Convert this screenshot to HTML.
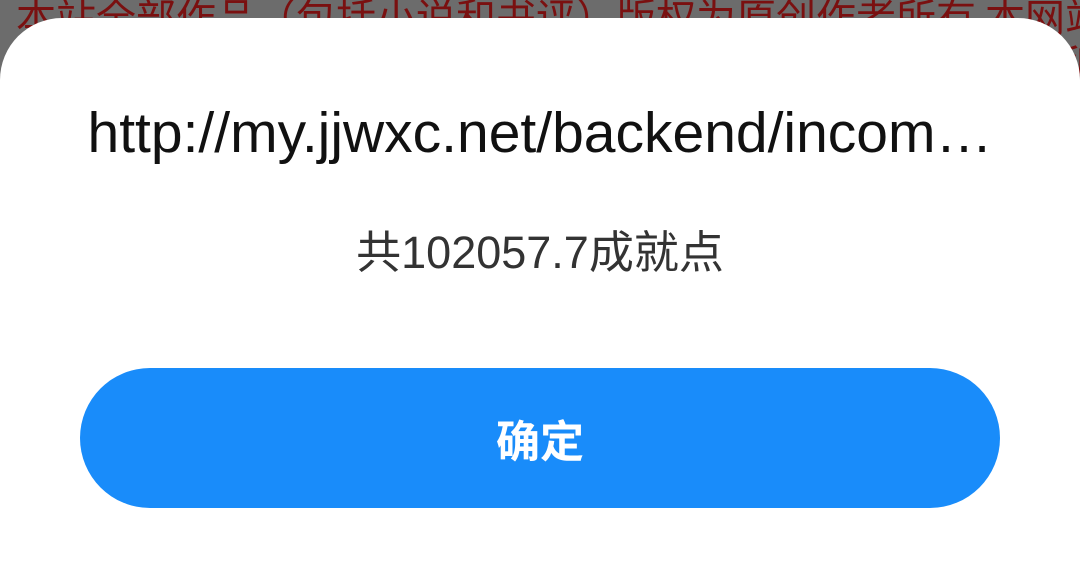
<!DOCTYPE html>
<html><head><meta charset="utf-8"><style>
html,body{margin:0;padding:0;width:1080px;height:588px;overflow:hidden;background:#6c6c6c;}
body{position:relative;font-family:"Liberation Sans","Noto Sans CJK SC",sans-serif;}
.bg{position:absolute;left:16px;top:-14px;white-space:nowrap;font-size:40px;color:#7a1010;font-family:"Noto Sans CJK SC",sans-serif;}
.bg2{position:absolute;left:1058px;top:32px;font-size:40px;color:#7a1010;font-family:"Noto Sans CJK SC",sans-serif;}
.dlg{position:absolute;left:0;top:18px;width:1080px;height:570px;background:#fff;border-radius:62px 62px 0 0;}
.t{position:absolute;left:0;width:1080px;text-align:center;top:100px;font-size:57px;line-height:66px;color:#111;white-space:nowrap;}
.s{position:absolute;left:0;width:1080px;text-align:center;top:225px;font-size:45px;line-height:56px;color:#333;}
.b{position:absolute;left:80px;top:368px;width:920px;height:140px;border-radius:70px;background:#198cfa;color:#fff;font-size:44px;font-weight:bold;text-align:center;line-height:140px;font-family:"Noto Sans CJK SC",sans-serif;}
</style></head><body>
<div class="bg">本站全部作品（包括小说和书评）版权为原创作者所有 本网站</div>
<div class="bg2">所</div>
<div class="dlg"></div>
<div class="t">http://my.jjwxc.net/backend/incom…</div>
<div class="s">共102057.7成就点</div>
<div class="b">确定</div>
</body></html>
